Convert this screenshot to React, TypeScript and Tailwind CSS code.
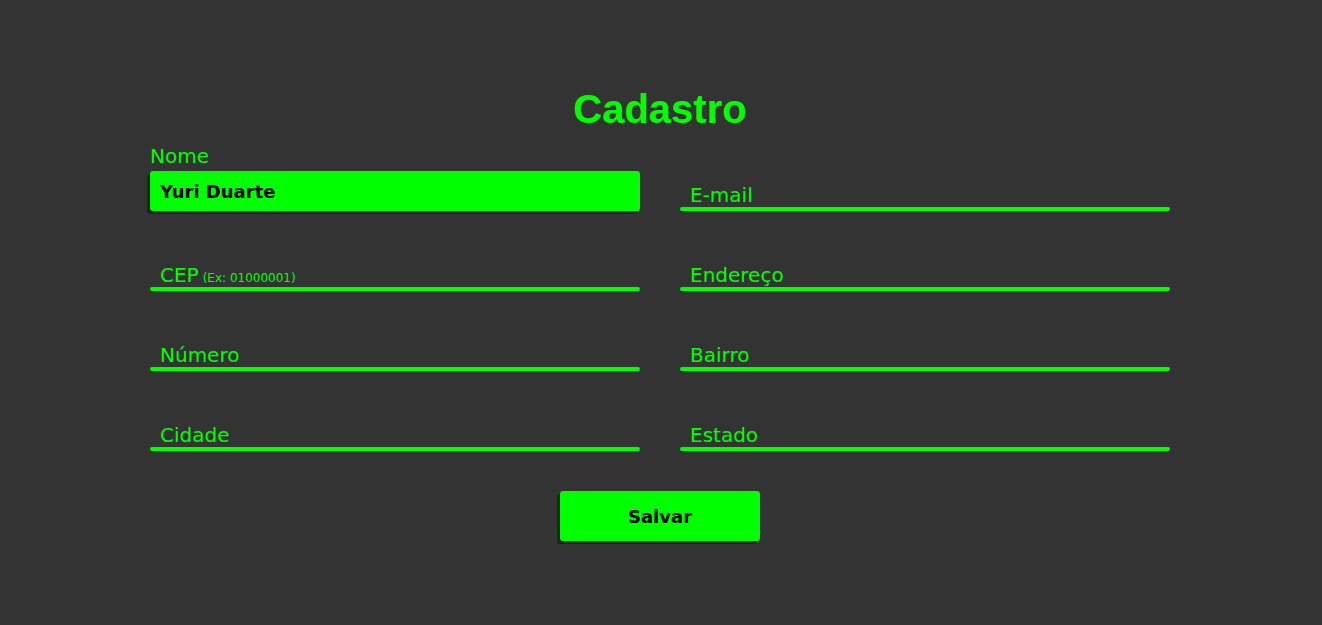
const font = { fontFamily: '"DejaVu Sans", sans-serif' };

function Field({ label, hint }: { label: string; hint?: string }) {
  return (
    <div className="flex h-20 flex-col justify-end">
      <label className="pl-[10px] pb-[2px] text-[20px] leading-none text-[#00ff00]">
        {label}
        {hint && <span className="ml-1 text-[12px]">{hint}</span>}
      </label>
      <div className="h-1 rounded-full bg-[#00ff00]" />
    </div>
  );
}

export default function App() {
  return (
    <div className="min-h-screen bg-[#333333] pt-[87px]" style={font}>
      <form className="ml-[150px] w-[1020px]" onSubmit={(e) => e.preventDefault()}>
        <h1
          className="text-center text-[40px] font-bold leading-[44px] text-[#00ff00]"
          style={{ fontFamily: '"Liberation Sans", Arial, sans-serif' }}
        >
          Cadastro
        </h1>

        <div className="mt-1 grid grid-cols-2 gap-x-10">
          <div className="flex flex-col justify-end pt-[12px]">
            <label className="mb-[6px] text-[20px] leading-[18px] text-[#00ff00]">Nome</label>
            <input
              defaultValue="Yuri Duarte"
              className="h-10 w-full rounded-[3px] bg-[#00ff00] px-[10px] text-[18px] font-bold text-black shadow-[-3px_3px_0_#222222] outline-none"
            />
          </div>
          <div className="flex flex-col justify-end">
            <label className="pl-[10px] pb-[2px] text-[20px] leading-none text-[#00ff00]">E-mail</label>
            <div className="h-1 rounded-full bg-[#00ff00]" />
          </div>

          <Field label="CEP" hint="(Ex: 01000001)" />
          <Field label="Endereço" />
          <Field label="Número" />
          <Field label="Bairro" />
          <Field label="Cidade" />
          <Field label="Estado" />
        </div>

        <div className="mt-10 flex justify-center">
          <button
            type="submit"
            className="h-[50px] w-[200px] rounded-[3px] bg-[#00ff00] text-[18px] font-bold text-black shadow-[-3px_3px_0_#222222]"
          >
            Salvar
          </button>
        </div>
      </form>
    </div>
  );
}
